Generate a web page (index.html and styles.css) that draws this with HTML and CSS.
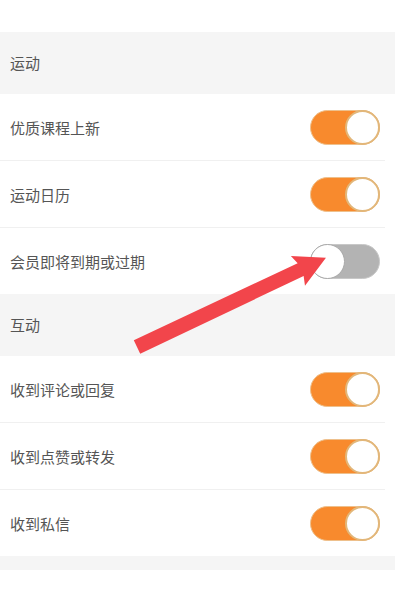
FILE: index.html
```html
<!DOCTYPE html>
<html lang="zh-CN">
<head>
  <meta charset="UTF-8" />
  <meta name="viewport" content="width=device-width, initial-scale=1.0"/>
  <title>消息通知</title>
  <link rel="stylesheet" href="styles.css">
</head>
<body>
  <div class="page">
    <div class="top-space"></div>

    <div class="section-title">运动</div>
    <div class="group">
      <div class="row">
        <span>优质课程上新</span>
        <span class="switch on"><span class="knob"></span></span>
      </div>
      <div class="row">
        <span>运动日历</span>
        <span class="switch on"><span class="knob"></span></span>
      </div>
      <div class="row">
        <span>会员即将到期或过期</span>
        <span class="switch off"><span class="knob"></span></span>
      </div>
    </div>

    <div class="section-title">互动</div>
    <div class="group">
      <div class="row">
        <span>收到评论或回复</span>
        <span class="switch on"><span class="knob"></span></span>
      </div>
      <div class="row">
        <span>收到点赞或转发</span>
        <span class="switch on"><span class="knob"></span></span>
      </div>
      <div class="row">
        <span>收到私信</span>
        <span class="switch on"><span class="knob"></span></span>
      </div>
    </div>
    <div class="bottom-gap"></div>

    <!-- annotation arrow -->
    <svg class="arrow" width="400" height="600" viewBox="0 0 400 600">
      <g transform="translate(137 347) rotate(-25.3)">
        <polygon points="0,-7.5 181,-7 178,-16.5 209,0 178,16.5 181,7 0,7.5" fill="#f2454b"/>
      </g>
    </svg>
  </div>
</body>
</html>
```

FILE: styles.css
```css
body {
  margin: 0;
  background-color: #fff;
  font-family: "Noto Sans CJK SC", "Noto Sans", sans-serif;
}

.page {
  position: relative;
  width: 395px;
  height: 600px;
}

.top-space {
  height: 32px;
}

.section-title {
  height: 62px;
  line-height: 62px;
  padding-left: 10px;
  background-color: #f5f5f5;
  color: #555;
  font-size: 15px;
}

.group {
  background-color: #fff;
}

.row {
  display: flex;
  justify-content: space-between;
  align-items: center;
  height: 66px;
  padding: 0 15px 0 10px;
  border-bottom: 1px solid #f0f0f0;
  margin-right: 10px;
  padding-right: 5px;
  color: #555;
  font-size: 15px;
}

.row:last-child {
  border-bottom: none;
}

.switch {
  position: relative;
  width: 70px;
  height: 35px;
  border-radius: 18px;
  box-sizing: border-box;
}

.switch.on {
  background-color: #f88a2d;
  border: 1px solid #eec08c;
}

.switch.off {
  background-color: #b3b3b3;
  border: 1px solid #c8c8c8;
}

.knob {
  position: absolute;
  top: -1px;
  width: 35px;
  height: 35px;
  border-radius: 50%;
  background-color: #fff;
  box-sizing: border-box;
}

.switch.on .knob {
  right: -1px;
  border: 2px solid #e2b77a;
}

.switch.off .knob {
  left: -1px;
  border: 1.5px solid #a9a9a9;
}

.bottom-gap {
  height: 14px;
  background-color: #f5f5f5;
}

.arrow {
  position: absolute;
  top: 0;
  left: 0;
  pointer-events: none;
}
```
